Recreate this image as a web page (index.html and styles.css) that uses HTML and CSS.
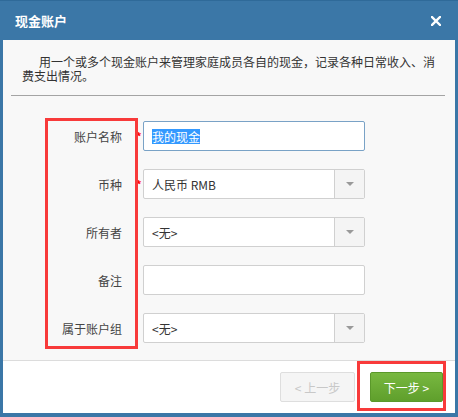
FILE: index.html
```html
<!DOCTYPE html>
<html lang="zh-CN">
<head>
<meta charset="utf-8">
<title>现金账户</title>
<link rel="stylesheet" href="styles.css">
</head>
<body>
<div class="dialog">
  <div class="titlebar">
    <span class="title">现金账户</span>
    <svg class="close" width="10" height="10" viewBox="0 0 10 10"><path d="M1 1L9 9M9 1L1 9" stroke="#fff" stroke-width="2.4" stroke-linecap="square"/></svg>
  </div>
  <div class="content">
    <p class="desc">用一个或多个现金账户来管理家庭成员各自的现金，记录各种日常收入、消费支出情况。</p>
    <div class="sep"></div>
    <div class="form">
      <div class="label">账户名称</div>
      <div class="field focus"><span class="req">*</span><span class="sel">我的现金</span></div>
      <div class="label">币种</div>
      <div class="field select"><span class="req">*</span><span class="val">人民币 RMB</span><span class="drop"><i class="arrow"></i></span></div>
      <div class="label">所有者</div>
      <div class="field select"><span class="val">&lt;无&gt;</span><span class="drop"><i class="arrow"></i></span></div>
      <div class="label">备注</div>
      <div class="field"></div>
      <div class="label">属于账户组</div>
      <div class="field select"><span class="val">&lt;无&gt;</span><span class="drop"><i class="arrow"></i></span></div>
      <div class="mark mark-labels"></div>
    </div>
    <div class="footer">
      <button class="btn prev">&lt; 上一步</button>
      <button class="btn next">下一步 &gt;</button>
      <div class="mark mark-next"></div>
    </div>
  </div>
</div>
</body>
</html>
```
FILE: styles.css
```css
html, body {
  margin: 0;
  padding: 0;
}
body {
  font-family: "Noto Sans CJK SC", "Liberation Sans", sans-serif;
  font-size: 12px;
  color: #333;
}
.dialog {
  width: 458px;
  height: 417px;
  box-sizing: border-box;
  background: #3b77a7;
  border-top: 1px solid #2f6a99;
  padding: 0 3px 4px 3px;
  display: flex;
  flex-direction: column;
}
.titlebar {
  height: 39px;
  display: flex;
  align-items: center;
  justify-content: space-between;
  padding: 0 14px 0 12px;
  color: #fff;
}
.title {
  font-size: 13px;
  font-weight: bold;
}
.close {
  display: block;
}
.content {
  flex: 1;
  background: #f8f8f8;
  display: flex;
  flex-direction: column;
}
.desc {
  margin: 0;
  padding: 15px 19px 0 19px;
  text-indent: 17px;
  line-height: 14px;
  height: 40px;
  font-size: 12px;
}
.sep {
  height: 1px;
  background: #a4a4a4;
  margin: 0 10px 0 8px;
}
.form {
  position: relative;
  display: grid;
  grid-template-columns: 119px 222px;
  grid-auto-rows: 30px;
  column-gap: 21px;
  row-gap: 18px;
  padding: 25px 0 17px 0;
}
.label {
  text-align: right;
  align-self: center;
  color: #444;
}
.field {
  position: relative;
  box-sizing: border-box;
  border: 1px solid #d0d0d0;
  border-radius: 2px;
  background: #fff;
  display: flex;
  align-items: center;
  padding-left: 8px;
}
.field.focus {
  border-color: #79a2c6;
}
.sel {
  background: #3399ff;
  color: #fff;
  line-height: 15px;
}
.val {
  flex: 1;
}
.drop {
  width: 29px;
  align-self: stretch;
  border-left: 1px solid #d0d0d0;
  background: #f4f4f4;
  display: flex;
  align-items: center;
  justify-content: center;
}
.arrow {
  width: 0;
  height: 0;
  border-left: 4px solid transparent;
  border-right: 4px solid transparent;
  border-top: 4px solid #999;
}
.req {
  position: absolute;
  left: -8px;
  top: 9px;
  color: #f00;
  font-size: 11px;
  font-weight: bold;
  line-height: 10px;
}
.mark {
  position: absolute;
  border: 3px solid #f83a3a;
  box-sizing: border-box;
}
.mark-labels {
  left: 42px;
  top: 22px;
  width: 93px;
  height: 231px;
}
.footer {
  position: relative;
  flex: 1;
  background: #fff;
  border-top: 1px solid #dcdcdc;
  display: flex;
  justify-content: flex-end;
  align-items: flex-start;
  gap: 15px;
  padding: 11px 12px 0 0;
}
.btn {
  height: 30px;
  font-family: inherit;
  font-size: 12px;
  border-radius: 2px;
  padding: 0;
}
.prev {
  width: 75px;
  background: #f5f5f5;
  border: 1px solid #dedede;
  color: #c8c8c8;
}
.next {
  width: 73px;
  background: linear-gradient(#78b840, #5f9f2c);
  border: 1px solid #5a982a;
  color: #fff;
}
.mark-next {
  right: 9px;
  top: 0;
  width: 89px;
  height: 50px;
}
```
